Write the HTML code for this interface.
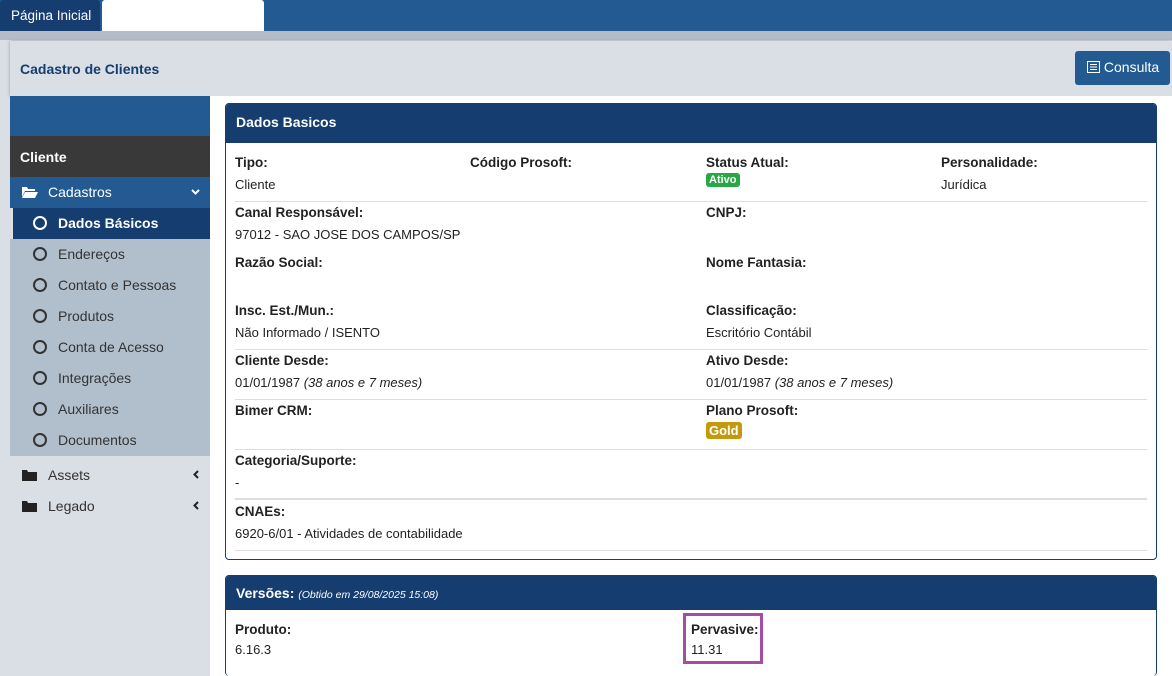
<!DOCTYPE html>
<html><head><meta charset="utf-8"><style>
*{box-sizing:border-box;margin:0;padding:0}
body{width:1172px;height:676px;overflow:hidden;background:#dadee5;font-family:"Liberation Sans","DejaVu Sans",sans-serif;font-size:13px;color:#222;position:relative}
.a{position:absolute}
.top{left:0;top:0;width:1172px;height:31px;background:#235a92}
.tab1{left:0;top:0;width:100px;height:31px;background:#153d6f;color:#fff;font-size:13.5px;padding:8px 0 0 11px;border-radius:3px 3px 0 0}
.tab2{left:102px;top:0;width:162px;height:31px;background:#fff;border-radius:3px 3px 0 0}
.band{left:0;top:31px;width:1172px;height:9px;background:#b4bcc7}
.hdr{left:10px;top:41px;width:1162px;height:55px;background:#dadee5;box-shadow:0 0 3px #999}
.title{left:20px;top:61px;color:#153d6f;font-weight:bold;font-size:14px}
.btn{left:1075px;top:51px;width:95px;height:34px;background:#235a92;border-radius:3px;color:#fff;font-size:14px;padding:8px 0 0 12px}
.side{left:10px;top:96px;width:200px;height:580px;background:#dadee5}
.main{left:210px;top:96px;width:962px;height:580px;background:#fff}
.mi{position:absolute;left:10px;width:200px;height:31px;font-size:14px;padding-top:7px}
.sub{color:#333;padding-left:48px;background:#b1bfcd}
.ring{position:absolute;left:23px;top:8px;width:14px;height:14px;border:2.5px solid #333;border-radius:50%}
.panel{position:absolute;left:225px;width:932px;border:1px solid #153d6f;border-radius:4px;background:#fff;overflow:hidden}
.ph{background:#153d6f;color:#fff;font-weight:bold;font-size:14px;padding-left:10px}
.l{position:absolute;font-weight:bold;font-size:13.5px}
.v{position:absolute;font-size:13px}
.ln{position:absolute;left:235px;width:912px;height:1px;background:#ddd}
.badge{position:absolute;color:#fff;font-weight:bold;font-size:12px;border-radius:3px;padding:1px 3px}
</style></head><body>
<div class="a top"></div>
<div class="a tab1">Página Inicial</div>
<div class="a tab2"></div>
<div class="a band"></div>
<div class="a hdr"></div>
<div class="a title">Cadastro de Clientes</div>
<div class="a btn"><svg width="13" height="12" style="vertical-align:-1px"><rect x="0.5" y="0.5" width="12" height="11" fill="none" stroke="#fff"/><path d="M3 3.5h7M3 6h7M3 8.5h7" stroke="#fff"/></svg> Consulta</div>
<div class="a side"></div>
<div class="a main"></div>
<div class="a" style="left:10px;top:96px;width:200px;height:40px;background:#235a92"></div>
<div class="mi" style="top:136px;height:41px;background:#393939;color:#fff;font-weight:bold;padding:13px 0 0 10px">Cliente</div>
<div class="mi" style="top:177px;background:#235a92;color:#fff;padding-left:38px"><svg class="a" style="left:12px;top:9px" width="16" height="12"><path d="M0 1h5l1 2h7v2H3L0 11z M3 6h13l-3 6H0z" fill="#fff"/></svg>Cadastros<svg class="a" style="left:181px;top:12px" width="9" height="7"><path d="M1 1l3.5 3.5L8 1" stroke="#fff" stroke-width="2" fill="none"/></svg></div>
<div class="mi" style="top:208px;left:13px;width:197px;background:#153d6f;color:#fff;font-weight:bold;padding-left:45px"><span class="ring" style="border-color:#fff;left:20px"></span>Dados Básicos</div>
<div class="mi sub" style="top:239px"><span class="ring"></span>Endereços</div>
<div class="mi sub" style="top:270px"><span class="ring"></span>Contato e Pessoas</div>
<div class="mi sub" style="top:301px"><span class="ring"></span>Produtos</div>
<div class="mi sub" style="top:332px"><span class="ring"></span>Conta de Acesso</div>
<div class="mi sub" style="top:363px"><span class="ring"></span>Integrações</div>
<div class="mi sub" style="top:394px"><span class="ring"></span>Auxiliares</div>
<div class="mi sub" style="top:425px"><span class="ring"></span>Documentos</div>
<div class="mi" style="top:460px;padding-left:38px;color:#333"><svg class="a" style="left:12px;top:10px" width="15" height="11"><path d="M0 0h5l1 2h9v9H0z" fill="#222"/></svg>Assets<svg class="a" style="left:183px;top:10px" width="7" height="9"><path d="M5 1L1.5 4.5 5 8" stroke="#222" stroke-width="2" fill="none"/></svg></div>
<div class="mi" style="top:491px;padding-left:38px;color:#333"><svg class="a" style="left:12px;top:10px" width="15" height="11"><path d="M0 0h5l1 2h9v9H0z" fill="#222"/></svg>Legado<svg class="a" style="left:183px;top:10px" width="7" height="9"><path d="M5 1L1.5 4.5 5 8" stroke="#222" stroke-width="2" fill="none"/></svg></div>

<div class="panel" style="top:103px;height:457px"><div class="ph" style="height:39px;padding-top:10px">Dados Basicos</div></div>
<div class="l" style="left:235px;top:155px">Tipo:</div><div class="v" style="left:235px;top:177px">Cliente</div>
<div class="l" style="left:470px;top:155px">Código Prosoft:</div>
<div class="l" style="left:706px;top:155px">Status Atual:</div><div class="badge" style="left:706px;top:173px;background:#28a745;font-size:11px">Ativo</div>
<div class="l" style="left:941px;top:155px">Personalidade:</div><div class="v" style="left:941px;top:177px">Jurídica</div>
<div class="ln" style="top:201px"></div>
<div class="l" style="left:235px;top:205px">Canal Responsável:</div><div class="v" style="left:235px;top:227px">97012 - SAO JOSE DOS CAMPOS/SP</div>
<div class="l" style="left:706px;top:205px">CNPJ:</div>
<div class="l" style="left:235px;top:255px">Razão Social:</div>
<div class="l" style="left:706px;top:255px">Nome Fantasia:</div>
<div class="l" style="left:235px;top:303px">Insc. Est./Mun.:</div><div class="v" style="left:235px;top:325px">Não Informado / ISENTO</div>
<div class="l" style="left:706px;top:303px">Classificação:</div><div class="v" style="left:706px;top:325px">Escritório Contábil</div>
<div class="ln" style="top:349px"></div>
<div class="l" style="left:235px;top:353px">Cliente Desde:</div><div class="v" style="left:235px;top:375px">01/01/1987 <i>(38 anos e 7 meses)</i></div>
<div class="l" style="left:706px;top:353px">Ativo Desde:</div><div class="v" style="left:706px;top:375px">01/01/1987 <i>(38 anos e 7 meses)</i></div>
<div class="ln" style="top:399px"></div>
<div class="l" style="left:235px;top:403px">Bimer CRM:</div>
<div class="l" style="left:706px;top:403px">Plano Prosoft:</div><div class="badge" style="left:706px;top:422px;background:#c49a0c;font-size:13px">Gold</div>
<div class="ln" style="top:449px"></div>
<div class="l" style="left:235px;top:453px">Categoria/Suporte:</div><div class="v" style="left:235px;top:475px">-</div>
<div class="ln" style="top:498px;height:2px"></div>
<div class="l" style="left:235px;top:504px">CNAEs:</div><div class="v" style="left:235px;top:526px">6920-6/01 - Atividades de contabilidade</div>
<div class="ln" style="top:550px"></div>

<div class="panel" style="top:575px;height:101px;border-bottom:none"><div class="ph" style="height:34px;padding-top:9px">Versões: <i style="font-weight:normal;font-size:10.5px">(Obtido em 29/08/2025 15:08)</i></div></div>
<div class="l" style="left:235px;top:622px">Produto:</div><div class="v" style="left:235px;top:642px">6.16.3</div>
<div class="a" style="left:683px;top:613px;width:80px;height:51px;border:3px solid #a64ca6"></div>
<div class="l" style="left:691px;top:622px">Pervasive:</div><div class="v" style="left:691px;top:642px">11.31</div>
</body></html>
